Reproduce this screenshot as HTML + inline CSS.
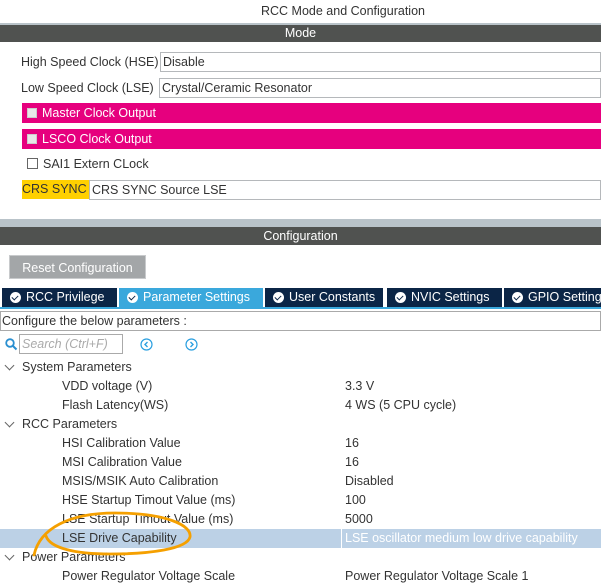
<!DOCTYPE html>
<html><head><style>
*{margin:0;padding:0;box-sizing:border-box}
body{width:601px;height:584px;overflow:hidden;background:#fff;font-family:"Liberation Sans",sans-serif;font-size:12.5px;color:#333;position:relative}
.a{position:absolute;white-space:nowrap}
.inp{position:absolute;border:1px solid #b5b8bb;background:#fff;height:20px;line-height:18px;padding-left:2px;color:#333}
.bar{position:absolute;left:0;width:601px;background:#505250;color:#fff;text-align:center}
.mag{position:absolute;left:22px;width:579px;height:20px;background:#e6007e;color:#fff;line-height:20px;padding-left:20px}
.cb{position:absolute;left:5px;top:5px;width:10px;height:10px;background:#e8e8e8;border:1px solid #ccc}
.tab{position:absolute;top:288px;height:19px;background:#0b2546;color:#fff;line-height:19px;padding-left:24px;white-space:nowrap;overflow:hidden}
.tab i{position:absolute;left:8px;top:4px;width:11px;height:11px;border-radius:50%;background:#fff}
.tab i:after{content:"";position:absolute;left:3px;top:2px;width:3px;height:5px;border:solid #0b2546;border-width:0 1.6px 1.6px 0;transform:rotate(45deg)}
.r{position:absolute;left:62px;white-space:nowrap}
.v{position:absolute;left:345px;white-space:nowrap}
.h{position:absolute;left:22px;white-space:nowrap}
.chev{position:absolute;left:6px;width:7px;height:7px;border:solid #666;border-width:0 1px 1px 0;transform:rotate(45deg)}
</style></head><body>
<div class="a" style="left:0;top:4px;width:686px;text-align:center;font-size:12.5px">RCC Mode and Configuration</div>
<div class="a" style="left:0;top:23px;width:601px;height:2px;background:#b9c3c9"></div>
<div class="bar" style="top:25px;height:17px;line-height:17px">Mode</div>
<div class="a" style="left:21px;top:55px">High Speed Clock (HSE)</div>
<div class="inp" style="left:160px;top:52px;width:441px">Disable</div>
<div class="a" style="left:21px;top:81px">Low Speed Clock (LSE)</div>
<div class="inp" style="left:159px;top:78px;width:442px">Crystal/Ceramic Resonator</div>
<div class="mag" style="top:103px"><span class="cb"></span>Master Clock Output</div>
<div class="mag" style="top:129px"><span class="cb"></span>LSCO Clock Output</div>
<div class="a" style="left:27px;top:158px;width:11px;height:11px;border:1px solid #666;background:#fff"></div>
<div class="a" style="left:43px;top:157px">SAI1 Extern CLock</div>
<div class="a" style="left:22px;top:180px;width:67px;height:19px;background:#ffd000;line-height:19px;color:#333">CRS SYNC</div>
<div class="inp" style="left:89px;top:180px;width:512px">CRS SYNC Source LSE</div>
<div class="a" style="left:0;top:219px;width:601px;height:8px;background:#b9c3c9"></div>
<div class="bar" style="top:227px;height:18px;line-height:18px">Configuration</div>
<div class="a" style="left:9px;top:255px;width:137px;height:24px;background:#a3a6a8;color:#fff;text-align:center;line-height:24px;border:1px solid #c8cacc">Reset Configuration</div>
<div class="tab" style="left:2px;width:115px"><i></i>RCC Privilege</div>
<div class="tab" style="left:119px;width:144px;background:#3aa8dc"><i></i>Parameter Settings</div>
<div class="tab" style="left:265px;width:118px"><i></i>User Constants</div>
<div class="tab" style="left:387px;width:115px"><i></i>NVIC Settings</div>
<div class="tab" style="left:504px;width:97px"><i></i>GPIO Settings</div>
<div class="a" style="left:0;top:307px;width:601px;height:2px;background:#3aa8dc"></div>
<div class="a" style="left:0;top:311px;width:601px;height:20px;border:1px solid #aaa;line-height:18px;padding-left:1px">Configure the below parameters :</div>
<svg class="a" style="left:5px;top:338px" width="13" height="13"><circle cx="5" cy="5" r="3.8" fill="none" stroke="#2a8fd0" stroke-width="1.8"/><line x1="8" y1="8" x2="11.5" y2="11.5" stroke="#2a8fd0" stroke-width="2"/></svg>
<div class="a" style="left:19px;top:334px;width:104px;height:20px;border:1px solid #aaa;color:#aaa;font-style:italic;line-height:18px;padding-left:2px">Search (Ctrl+F)</div>
<svg class="a" style="left:140px;top:338px" width="13" height="13"><circle cx="6.5" cy="6.5" r="5.5" fill="none" stroke="#2a9fe0" stroke-width="1.2"/><path d="M7.5 4 L5 6.5 L7.5 9" fill="none" stroke="#2a9fe0" stroke-width="1.4"/></svg>
<svg class="a" style="left:185px;top:338px" width="13" height="13"><circle cx="6.5" cy="6.5" r="5.5" fill="none" stroke="#2a9fe0" stroke-width="1.2"/><path d="M5.5 4 L8 6.5 L5.5 9" fill="none" stroke="#2a9fe0" stroke-width="1.4"/></svg>
<div class="a" style="left:0;top:529px;width:601px;height:19px;background:#bcd1e6"></div>
<div class="a" style="left:341px;top:529px;width:1px;height:19px;background:#fff"></div>
<span class="chev" style="top:362px"></span><div class="h" style="top:360px">System Parameters</div>
<div class="r" style="top:379px">VDD voltage (V)</div><div class="v" style="top:379px">3.3 V</div>
<div class="r" style="top:398px">Flash Latency(WS)</div><div class="v" style="top:398px">4 WS (5 CPU cycle)</div>
<span class="chev" style="top:419px"></span><div class="h" style="top:417px">RCC Parameters</div>
<div class="r" style="top:436px">HSI Calibration Value</div><div class="v" style="top:436px">16</div>
<div class="r" style="top:455px">MSI Calibration Value</div><div class="v" style="top:455px">16</div>
<div class="r" style="top:474px">MSIS/MSIK Auto Calibration</div><div class="v" style="top:474px">Disabled</div>
<div class="r" style="top:493px">HSE Startup Timout Value (ms)</div><div class="v" style="top:493px">100</div>
<div class="r" style="top:512px">LSE Startup Timout Value (ms)</div><div class="v" style="top:512px">5000</div>
<div class="r" style="top:531px">LSE Drive Capability</div><div class="v" style="top:531px;color:#fff">LSE oscillator medium low drive capability</div>
<span class="chev" style="top:552px"></span><div class="h" style="top:550px">Power Parameters</div>
<div class="r" style="top:569px">Power Regulator Voltage Scale</div><div class="v" style="top:569px">Power Regulator Voltage Scale 1</div>
<svg class="a" style="left:0;top:0" width="601" height="584"><path d="M34 555 C40 528 70 513 115 513 C165 513 192 525 190 537 C187 549 150 554 110 554 C75 554 50 548 46 536" fill="none" stroke="#f5a000" stroke-width="2.8" stroke-linecap="round"/></svg>
</body></html>
